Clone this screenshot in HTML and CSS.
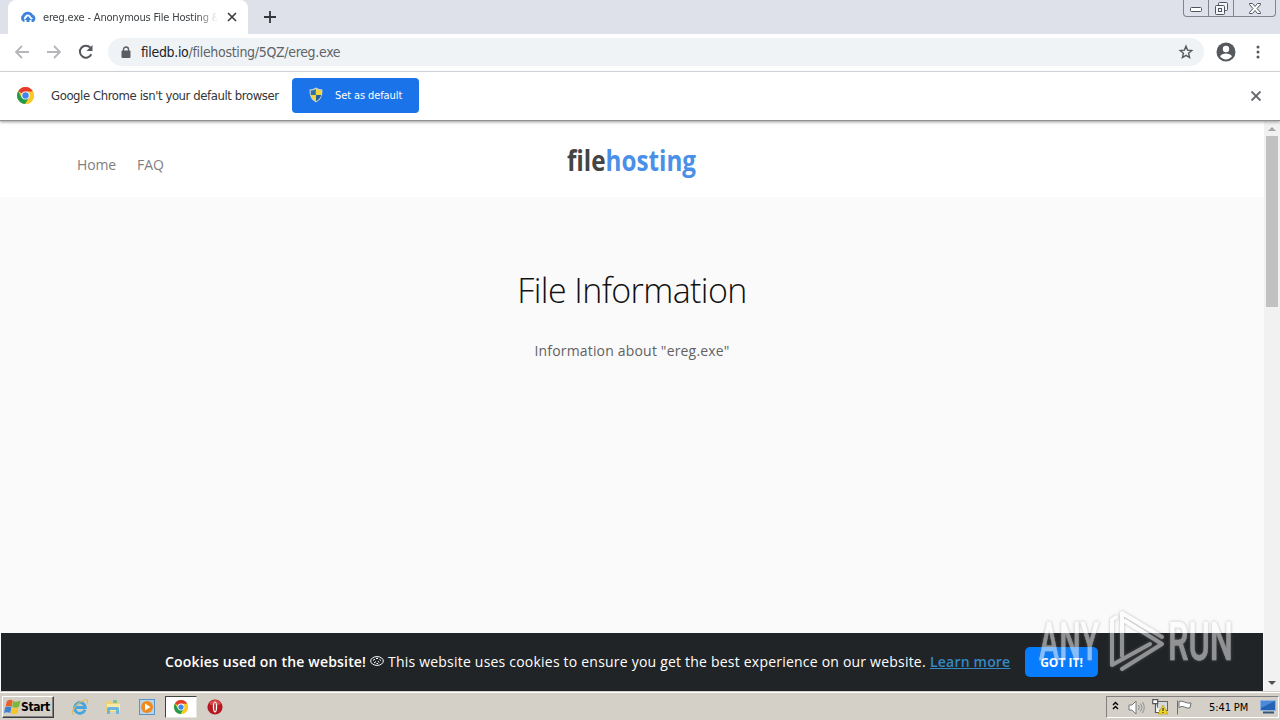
FILE: index.html
```html
<!DOCTYPE html>
<html lang="en">
<head>
    <meta charset="utf-8"/>
    <title>ereg.exe - Anonymous File Hosting</title>
    <link rel="stylesheet" href="styles.css">
</head>
<body>
<svg class="defs" width="0" height="0">
    <symbol id="chrome-logo" viewBox="0 0 24 24">
        <circle cx="12" cy="12" r="12" fill="#fbc926"/>
        <path d="M12 12 1.600 6A12 12 0 0 1 22.400 6z" fill="#e33b2e"/>
        <path d="M12 12 6.800 15 1.600 6A12 12 0 0 0 11.500 24L17.200 15z" fill="#229b4c"/>
        <path d="M12 12V6.300h10.600A12 12 0 0 1 11.500 24l5.700-9z" fill="#fbc926"/>
        <circle cx="12" cy="12" r="5.800" fill="#fff"/>
        <circle cx="12" cy="12" r="4.500" fill="#4285e8"/>
    </symbol>
</svg>

<div class="tab-strip">
    <div class="tab">
        <svg class="favicon" width="16" height="12" viewBox="0 0 16 12">
            <path d="M4.500 9.500H4A2.600 2.600 0 0 1 3.500 5 4.600 4.600 0 0 1 12 5 2.500 2.500 0 0 1 13 9.500H11.500" fill="none" stroke="#3d83dc" stroke-width="2.800"/>
            <path d="M8 5l3.500 4H9.500v2h-3V9h-2z" fill="#3d83dc"/>
        </svg>
        <span class="tab-title">ereg.exe - Anonymous File Hosting &amp;</span>
        <svg width="10" height="10" viewBox="0 0 10 10"><path d="M1 1l8 8M9 1L1 9" stroke="#3c4043" stroke-width="1.700"/></svg>
    </div>
    <svg class="new-tab" width="12" height="12" viewBox="0 0 12 12"><path d="M6 0v12M0 6h12" stroke="#33363a" stroke-width="1.800"/></svg>
    <div class="window-buttons">
        <span class="win-min"><svg width="12" height="5"><rect x=".5" y=".5" width="11" height="4" rx="1" fill="#fff" stroke="#50545d"/></svg></span>
        <span class="win-max"><svg width="13" height="13" fill="#f4f5f8" stroke="#50545d"><rect x="3.500" y=".5" width="9" height="8" rx="1"/><rect x=".5" y="3.500" width="9" height="9" rx="1"/><rect x="3.500" y="6.500" width="3" height="3"/></svg></span>
        <span class="win-close"><svg width="12" height="11" viewBox="0 0 12 11"><path d="M.5.5h3L6 3.500 8.500.5h3v1L8 5.500l3.500 4v1h-3L6 7.500l-2.500 3h-3v-1L4 5.500.5 1.500z" fill="#fff" stroke="#50545d"/></svg></span>
    </div>
</div>

<div class="toolbar">
    <svg class="tool-back" width="16" height="14" viewBox="0 0 16 14" fill="none" stroke="#b4b6b9" stroke-width="1.800"><path d="M15 7H2M8 1L2 7l6 6"/></svg>
    <svg class="tool-forward" width="16" height="14" viewBox="0 0 16 14" fill="none" stroke="#b4b6b9" stroke-width="1.800"><path d="M1 7h13M8 1l6 6-6 6"/></svg>
    <svg class="tool-reload" width="16" height="16" viewBox="0 0 16 16"><path d="M13.300 10.300A6 6 0 1 1 12.400 3.700" fill="none" stroke="#55585c" stroke-width="2"/><path d="M14.500 1v6h-6z" fill="#55585c"/></svg>
    <div class="address">
        <svg width="10" height="13" viewBox="0 0 10 13"><path d="M2.500 5.500V3.500a2.500 2.500 0 0 1 5 0v2" fill="none" stroke="#5a5d61" stroke-width="1.400"/><rect x="0.500" y="4.500" width="9" height="7.500" rx="1" fill="#5a5d61"/></svg>
        <span class="url"><b>filedb.io</b>/filehosting/5QZ/ereg.exe</span>
        <svg class="star" width="16" height="16" viewBox="0 0 16 16"><path d="M8 2.200l1.600 3.900 4.200.4-3.200 2.800 1 4.200L8 11.300l-3.600 2.200 1-4.200-3.200-2.800 4.200-.4z" fill="none" stroke="#55585c" stroke-width="1.400"/></svg>
    </div>
    <svg class="avatar" width="20" height="20" viewBox="0 0 20 20"><circle cx="10" cy="10" r="9.500" fill="#55585c"/><circle cx="10" cy="7" r="3.200" fill="#fff"/><path d="M4 14.300c1.200-2 3.500-2.900 6-2.900s4.800.9 6 2.900a7.300 7.300 0 0 1-12 0z" fill="#fff"/></svg>
    <svg class="menu" width="4" height="14" viewBox="0 0 4 14" fill="#55585c"><circle cx="2" cy="2" r="1.500"/><circle cx="2" cy="7" r="1.500"/><circle cx="2" cy="12" r="1.500"/></svg>
</div>

<div class="infobar">
    <svg width="17" height="17"><use href="#chrome-logo"/></svg>
    <span class="infobar-text">Google Chrome isn't your default browser</span>
    <button class="default-btn">
        <svg width="14" height="16" viewBox="0 0 14 16">
            <path d="M7 .5Q10 2.500 13.500 2.500 14 12 7 15.500 0 12 .5 2.500 4 2.500 7 .5z" fill="#c9d3c4"/>
            <path d="M6.800 2Q4.500 3.500 1.800 3.600V8h5z" fill="#2f6fae"/>
            <path d="M7 2q2.500 1.500 5.300 1.600Q12.400 6 12.200 8H7z" fill="#f4d53c"/>
            <path d="M2 8h5v6.200Q2.700 12 2 8z" fill="#f4d53c"/>
            <path d="M7 8h5.200Q11.200 12 7 14.200z" fill="#25609f"/>
        </svg>
        <span>Set as default</span>
    </button>
    <svg class="infobar-close" width="10" height="10" viewBox="0 0 10 10"><path d="M.5.5l9 9M9.500.5l-9 9" stroke="#5f6368" stroke-width="1.900"/></svg>
</div>

<div class="viewport">
    <div class="page">
        <div class="navbar">
            <a class="nav-home">Home</a>
            <a class="nav-faq">FAQ</a>
            <svg class="brand" width="134" height="40">
                <text x="1" y="26" textLength="129" lengthAdjust="spacingAndGlyphs">file<tspan class="brand-blue">hosting</tspan></text>
            </svg>
        </div>
        <div class="content">
            <h1>File Information</h1>
            <p>Information about "ereg.exe"</p>
        </div>
        <div class="cookie-bar">
            <strong>Cookies used on the website!</strong>
            <svg class="cookie" width="14" height="10" viewBox="0 0 14 10" fill="none" stroke="#fff"><ellipse cx="7" cy="5" rx="6.300" ry="4.400"/><path d="M3 4.500l2-1.500M6 2.500h2M9.500 3.500l1.500 1M4 7l2-1.500M8 5l1 1.500M6.500 7.500h1.500"/></svg>
            <span class="cookie-text">This website uses cookies to ensure you get the best experience on our website.</span>
            <a class="learn">Learn more</a>
            <button class="got-it">GOT IT!</button>
        </div>
    </div>
    <div class="scrollbar">
        <svg width="8" height="5"><path d="M0 5l4-4 4 4z" fill="#a3a3a3"/></svg>
        <div class="thumb"></div>
        <svg class="scroll-down" width="8" height="5"><path d="M0 0h8L4 4z" fill="#505050"/></svg>
    </div>
</div>

<div class="taskbar">
    <div class="start">
        <svg width="17" height="16" viewBox="0 0 17 16">
            <path d="M3 2Q6 0 8.800 1.500L7.700 7.700Q5 6.200 1.500 7.700z" fill="#e8622c"/>
            <path d="M9.300 2Q12.500 3.500 16.500 1.500L15 8Q11.500 9.500 8.200 8z" fill="#7ab83c"/>
            <path d="M1.300 8.300Q4.500 6.800 7.500 8.300L6.200 14Q3.500 12.500 0 14z" fill="#3b82d0"/>
            <path d="M8 8.600Q11 10.200 14.800 8.600L13.300 14.500Q10 16 6.800 14.500z" fill="#f5c52f"/>
        </svg>
        <span>Start</span>
    </div>
    <svg class="ie" width="18" height="18" viewBox="0 0 18 18">
        <path d="M14 11.800A5.400 5.400 0 1 1 14.300 9.500H5" fill="none" stroke="#45a5de" stroke-width="2.800"/>
        <path d="M2.500 16.500C-1.500 15 5 5 14 2c3.500-1 3 1 2 3.500" fill="none" stroke="#dcbc55" stroke-width="1.200"/>
    </svg>
    <svg class="explorer" width="16" height="16" viewBox="0 0 16 16">
        <path d="M1 2h5l1 2h7v9H1z" fill="#ecd27a"/><path d="M2 5h13v7H2z" fill="#f8e9a8"/><path d="M8 1h4v3H8z" fill="#7cc48b"/>
        <path d="M2 15V9.500q0-1.500 1.500-1.500h9q1.500 0 1.500 1.500V15h-3v-4H5v4z" fill="#6db5dd"/>
    </svg>
    <svg class="media" width="16" height="16" viewBox="0 0 16 16"><rect x=".5" y=".5" width="15" height="15" fill="#b9d5ec" stroke="#5b94c6"/><circle cx="8" cy="8" r="6" fill="#f18a1c"/><path d="M6 4.500L11.500 8 6 11.500z" fill="#fff"/></svg>
    <div class="task-active"><svg width="14" height="14"><use href="#chrome-logo"/></svg></div>
    <svg class="opera" width="16" height="16" viewBox="0 0 16 16"><circle cx="8" cy="8" r="7.600" fill="#b51820"/><path d="M2 5a6.500 6.500 0 0 1 12 0q-6 3-12 0z" fill="#d5484b"/><ellipse cx="8" cy="8" rx="2.200" ry="5.600" fill="#fff"/><ellipse cx="8" cy="8" rx=".8" ry="4.400" fill="#a8141c"/></svg>
    <div class="tray">
        <svg class="chevrons" width="7" height="9" viewBox="0 0 7 9" fill="none" stroke="#000" stroke-width="1.400"><path d="M1 4l2.500-2.500L6 4M1 8l2.500-2.500L6 8"/></svg>
        <svg class="volume" width="17" height="15" viewBox="0 0 17 15" fill="none" stroke="#77797b"><path d="M1 5h3l4-4v13L4 10H1z" fill="#fff"/><path d="M10.500 5q1.500 2.500 0 5M12.500 3.500q3 4 0 8M14.500 2q3.500 5.500 0 11" stroke="#8d8f90"/></svg>
        <svg class="network" width="17" height="16" viewBox="0 0 17 16">
            <rect x="5.500" y="2.500" width="10" height="9" fill="#d7dadc" stroke="#666"/><path d="M.7.7h5v4h-5zM3.500 5v8.500H8" fill="#fff" stroke="#55595b" stroke-width="1.200"/>
            <path d="M11 6l5 9H6z" fill="#f5d624" stroke="#b49009" stroke-width=".6"/><path d="M11 9v3M11 13v1" stroke="#333" stroke-width="1.200"/>
        </svg>
        <svg class="flag" width="17" height="15" viewBox="0 0 17 15"><path d="M1.500.5v14M3 1.500q3-1 5.500.5t6.500 1l-1 5q-3 .5-5.500-1T3 7.500z" fill="#fff" stroke="#6d6f71"/></svg>
        <span class="clock">5:41 PM</span>
        <svg class="desktop" width="16" height="14" viewBox="0 0 16 14"><rect x=".5" y=".5" width="15" height="10" fill="#2563b5" stroke="#92b3dc"/><path d="M1 1h14L1 8z" fill="#4a8ad8"/><path d="M3 12.500h11" stroke="#35557d" stroke-width="2"/></svg>
    </div>
</div>

<svg class="watermark" width="200" height="70" viewBox="0 0 200 70">
    <text x="1" y="52" textLength="60" lengthAdjust="spacingAndGlyphs">ANY</text>
    <text x="130" y="52" textLength="65" lengthAdjust="spacingAndGlyphs">RUN</text>
    <g class="play">
        <path d="M78 9l-4 3v45l38-21"/>
        <path d="M84 48V5l40 24"/>
        <path d="M87 13l37 23-40 25"/>
    </g>
</svg>
</body>
</html>
```

FILE: styles.css
```css
body {
    margin: 0;
    width: 1280px;
    height: 720px;
    overflow: hidden;
    display: flex;
    flex-direction: column;
    background: #fff;
    font-family: "DejaVu Sans Condensed", "DejaVu Sans", sans-serif;
}

svg {
    display: block;
    flex: none;
}

.defs {
    position: absolute;
}

button {
    border: 0;
    padding: 0;
}

span, a, strong {
    white-space: nowrap;
}

/* browser chrome */
.tab-strip {
    height: 34px;
    flex: none;
    display: flex;
    background: #dee1e9;
}

.tab {
    box-sizing: border-box;
    width: 240px;
    margin-left: 8px;
    padding: 0 11px 0 12px;
    display: flex;
    align-items: center;
    background: #fff;
    border-radius: 8px 8px 0 0;
}

.tab-title {
    width: 175px;
    margin: 0 9px 0 7px;
    overflow: hidden;
    font-size: 11px;
    letter-spacing: -0.18px;
    color: #3c4043;
    -webkit-mask-image: linear-gradient(to right, #000 88%, transparent);
}

.new-tab {
    margin: 11px 0 0 16px;
}

.window-buttons {
    display: flex;
    height: 16px;
    margin: 0 4px 0 auto;
    border: 1px solid #80848f;
    border-top: 0;
    border-radius: 0 0 4px 4px;
}

.window-buttons span {
    display: flex;
    justify-content: center;
    align-items: center;
}

.win-min {
    width: 24px;
    padding-top: 3px;
}

.win-max {
    width: 24px;
    border-left: 1px solid #80848f;
    border-right: 1px solid #80848f;
}

.win-close {
    width: 41px;
}

.toolbar {
    height: 37px;
    flex: none;
    display: flex;
    align-items: center;
    padding-left: 14px;
    border-bottom: 1px solid #dadce0;
}

.toolbar > svg {
    margin-bottom: 1px;
}

.tool-forward {
    margin-left: 16px;
}

.tool-reload {
    margin-left: 16px;
}

.address {
    box-sizing: border-box;
    width: 1096px;
    height: 28px;
    margin: 0 0 1px 14px;
    padding: 0 10px 0 13px;
    display: flex;
    align-items: center;
    border-radius: 14px;
    background: #f0f3f6;
}

.url {
    margin-left: 10px;
    font-size: 14px;
    letter-spacing: -0.32px;
    color: #606468;
}

.url b {
    font-weight: normal;
    color: #202124;
}

.star {
    margin-left: auto;
}

.avatar {
    margin-left: 12px;
}

.menu {
    margin-left: 20px;
}

.infobar {
    box-sizing: border-box;
    height: 49px;
    flex: none;
    display: flex;
    align-items: center;
    padding: 0 19px 1px 17px;
    border-bottom: 1px solid #919191;
    box-shadow: 0 1px 3px #999;
    z-index: 1;
}

.infobar-text {
    margin: 0 0 1px 17px;
    width: 229px;
    font-size: 13px;
    letter-spacing: -0.42px;
    color: #333639;
}

.default-btn {
    width: 127px;
    height: 35px;
    margin: 0 0 1px 12px;
    padding-left: 17px;
    display: flex;
    align-items: center;
    gap: 12px;
    border-radius: 4px;
    background: #1a73e8;
    color: #fff;
    font-family: inherit;
    font-size: 11px;
    letter-spacing: -0.1px;
}

.infobar-close {
    margin-left: auto;
}

/* site */
.viewport {
    flex: 1;
    display: flex;
    min-height: 0;
}

.page {
    width: 1264px;
    display: flex;
    flex-direction: column;
    background: #fafafa;
    font-family: "Open Sans", sans-serif;
}

.navbar {
    box-sizing: border-box;
    height: 76px;
    padding-left: 77px;
    display: flex;
    align-items: flex-start;
    background: #fff;
    color: #808080;
    font-size: 14px;
    line-height: 20px;
}

.navbar a {
    margin-top: 34px;
}

.nav-home {
    width: 60px;
    letter-spacing: -0.15px;
}

.nav-faq {
    width: 28px;
}

.brand {
    margin: 24px 0 0 401px;
    font-family: "Open Sans", sans-serif;
    font-size: 28px;
    font-weight: 700;
    fill: #444;
}

.brand-blue {
    fill: #4a90e8;
}

.content {
    flex: 1;
    text-align: center;
}

h1 {
    margin: 68px 0 0;
    font-size: 34px;
    font-weight: 300;
    line-height: 50px;
    letter-spacing: -0.6px;
    color: #111;
}

.content p {
    margin: 25px 0 0;
    font-size: 14px;
    line-height: 22px;
    letter-spacing: 0.18px;
    color: #626262;
}

.cookie-bar {
    box-sizing: border-box;
    width: 1262px;
    height: 58px;
    margin-left: 1px;
    padding: 0 0 2px 164px;
    display: flex;
    align-items: center;
    background: #212427;
    color: #fff;
    font-size: 14px;
}

.cookie-bar strong {
    width: 201px;
    font-weight: 600;
    letter-spacing: 0.18px;
}

.cookie {
    margin-left: 4px;
}

.cookie-text {
    width: 538px;
    margin-left: 4px;
    letter-spacing: 0.21px;
}

.learn {
    width: 80px;
    margin-left: 4px;
    color: #3489c4;
    font-weight: 600;
    letter-spacing: 0.2px;
    text-decoration: underline;
}

.got-it {
    width: 73px;
    height: 30px;
    margin: 2px 0 0 15px;
    border-radius: 5px;
    background: #087cff;
    color: #fff;
    font-family: inherit;
    font-size: 12px;
    font-weight: 700;
}

.scrollbar {
    width: 16px;
    display: flex;
    flex-direction: column;
    align-items: center;
    padding: 5px 0 5px;
    box-sizing: border-box;
    background: #f1f1f1;
}

.thumb {
    width: 12px;
    height: 171px;
    margin-top: 5px;
    background: #c1c1c1;
}

.scroll-down {
    margin-top: auto;
}

/* taskbar */
.taskbar {
    box-sizing: border-box;
    height: 29px;
    flex: none;
    display: flex;
    align-items: center;
    padding: 3px 0 0 2px;
    background: #d4d0c8;
    box-shadow: inset 0 1px #d4d0c8, inset 0 2px #fff;
}

.start {
    box-sizing: border-box;
    width: 52px;
    height: 22px;
    display: flex;
    align-items: center;
    padding-left: 1px;
    border: 1px solid;
    border-color: #fff #404040 #404040 #fff;
    box-shadow: inset -1px -1px #808080;
    color: #000;
    font-size: 12px;
    font-weight: bold;
    letter-spacing: -0.4px;
}

.ie {
    margin-left: 17px;
}

.explorer {
    margin-left: 16px;
}

.media {
    margin-left: 18px;
}

.task-active {
    box-sizing: border-box;
    width: 32px;
    height: 22px;
    margin-left: 10px;
    display: flex;
    align-items: center;
    justify-content: center;
    background: #fff;
    border: 1px solid;
    border-color: #404040 #e8e6e0 #e8e6e0 #404040;
}

.opera {
    margin-left: 10px;
}

.tray {
    box-sizing: border-box;
    width: 173px;
    height: 22px;
    margin: 0 1px 0 auto;
    padding-left: 5px;
    display: flex;
    align-items: center;
    border: 1px solid;
    border-color: #808080 #fff #fff #808080;
}

.chevrons {
    margin-bottom: 3px;
}

.volume {
    margin-left: 9px;
}

.network {
    margin-left: 7px;
}

.flag {
    margin-left: 7px;
}

.clock {
    width: 40px;
    margin-left: 16px;
    font-size: 11px;
    letter-spacing: -0.1px;
    color: #000;
}

.desktop {
    margin-left: 11px;
}

/* overlay stamp */
.watermark {
    position: absolute;
    left: 1038px;
    top: 608px;
    z-index: 2;
    opacity: 0.5;
    filter: drop-shadow(0 0 1.5px #777);
    font-family: Roboto, sans-serif;
    font-size: 53px;
    font-weight: 500;
    fill: #fff;
}

.watermark text {
    stroke: #fff;
    stroke-width: 0.6;
}

.play {
    fill: none;
    stroke: #fff;
    stroke-width: 4;
    stroke-linecap: round;
    stroke-linejoin: round;
}
```
